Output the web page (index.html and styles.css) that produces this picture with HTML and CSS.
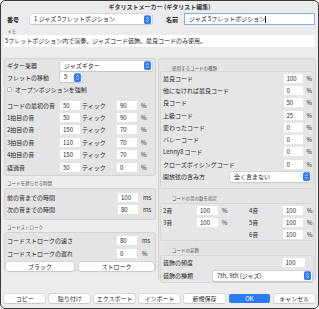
FILE: index.html
```html
<!DOCTYPE html>
<html lang="ja">
<head>
<meta charset="utf-8" />
<title>ギタリストメーカー</title>
<link rel="stylesheet" href="styles.css">
</head>
<body>
<div class="win">
	<div class="title">ギタリストメーカー (ギタリスト編集)</div>

	<div class="head">
		<span class="lbl-num">番号</span>
		<div class="sel sel-num">1 ジャズ 5フレットポジション
			<svg class="step" viewBox="0 0 8 10"><rect width="8" height="10" rx="2" fill="#2f7cf6"/><path d="M2.6 4.1 L4 2.6 L5.4 4.1 M2.6 5.9 L4 7.4 L5.4 5.9" stroke="#fff" stroke-width="0.9" fill="none"/></svg>
		</div>
		<span class="lbl-name">名前</span>
		<div class="inp name-inp">ジャズ 5フレットポジション<span class="caret"></span></div>
	</div>

	<div class="cap memo-cap">メモ</div>
	<div class="inp memo">5フレットポジション内で演奏。ジャズコード装飾。最良コードのみ使用。</div>

	<div class="main">
		<div class="col-l">
			<div class="box box-a">
				<div class="row r-sel">
					<span>ギター楽器</span>
					<div class="sel sel-gtr">ジャズギター
						<svg class="step" viewBox="0 0 8 10"><rect width="8" height="10" rx="2" fill="#2f7cf6"/><path d="M2.6 4.1 L4 2.6 L5.4 4.1 M2.6 5.9 L4 7.4 L5.4 5.9" stroke="#fff" stroke-width="0.9" fill="none"/></svg>
					</div>
				</div>
				<div class="row r-sel">
					<span>フレットの移動</span>
					<div class="sel sel-fret">5
						<svg class="step" viewBox="0 0 8 10"><rect width="8" height="10" rx="2" fill="#2f7cf6"/><path d="M2.6 4.1 L4 2.6 L5.4 4.1 M2.6 5.9 L4 7.4 L5.4 5.9" stroke="#fff" stroke-width="0.9" fill="none"/></svg>
					</div>
				</div>
				<div class="row r-chk">
					<span class="chk"></span>
					<span>オープンポジションを強制</span>
				</div>
				<div class="ticks">
					<div class="trow"><span>コードの最初の音</span><span class="num">50</span><span class="unit">ティック</span><span class="num">90</span><span class="pct">%</span></div>
					<div class="trow"><span>1拍目の音</span><span class="num">50</span><span class="unit">ティック</span><span class="num">90</span><span class="pct">%</span></div>
					<div class="trow"><span>2拍目の音</span><span class="num">150</span><span class="unit">ティック</span><span class="num">70</span><span class="pct">%</span></div>
					<div class="trow"><span>3拍目の音</span><span class="num">110</span><span class="unit">ティック</span><span class="num">70</span><span class="pct">%</span></div>
					<div class="trow"><span>4拍目の音</span><span class="num">150</span><span class="unit">ティック</span><span class="num">70</span><span class="pct">%</span></div>
					<div class="trow"><span>経過音</span><span class="num">50</span><span class="unit">ティック</span><span class="num">0</span><span class="pct">%</span></div>
				</div>
			</div>

			<div class="cap sec-cap">コードを遅らせる時間</div>
			<div class="box box-b">
				<div class="mrow"><span>前の音までの時間</span><span class="num">100</span><span class="unit">ms</span></div>
				<div class="mrow"><span>次の音までの時間</span><span class="num">80</span><span class="unit">ms</span></div>
			</div>

			<div class="cap sec-cap">コードストローク</div>
			<div class="box box-c">
				<div class="mrow"><span>コードストロークの速さ</span><span class="num">80</span><span class="unit">ms</span></div>
				<div class="mrow"><span>コードストロークの遅れ</span><span class="num">0</span><span class="unit">%</span></div>
				<div class="pair">
					<span class="btn">ブラック</span>
					<span class="btn">ストローク</span>
				</div>
			</div>
		</div>

		<div class="box col-r">
			<div class="cap rcap1">使用するコードの種類</div>
			<div class="sub sub-1">
				<div class="crow"><span>最良コード</span><span class="num">100</span><span class="pct">%</span></div>
				<div class="crow"><span>他になければ最良コード</span><span class="num">0</span><span class="pct">%</span></div>
				<div class="crow"><span>良コード</span><span class="num">50</span><span class="pct">%</span></div>
				<div class="crow"><span>上級コード</span><span class="num">25</span><span class="pct">%</span></div>
				<div class="crow"><span>変わったコード</span><span class="num">0</span><span class="pct">%</span></div>
				<div class="crow"><span>バレーコード</span><span class="num">0</span><span class="pct">%</span></div>
				<div class="crow"><span>Lenny8 コード</span><span class="num">0</span><span class="pct">%</span></div>
				<div class="crow"><span>クローズボイシングコード</span><span class="num">0</span><span class="pct">%</span></div>
				<div class="crow c-sel">
					<span>開放弦の含み方</span>
					<div class="sel sel-open">全く含まない
						<svg class="step" viewBox="0 0 8 10"><rect width="8" height="10" rx="2" fill="#2f7cf6"/><path d="M2.6 4.1 L4 2.6 L5.4 4.1 M2.6 5.9 L4 7.4 L5.4 5.9" stroke="#fff" stroke-width="0.9" fill="none"/></svg>
					</div>
				</div>
			</div>

			<div class="cap rcap">コードの音の数を指定</div>
			<div class="sub sub-2">
				<span>2音</span><span class="num">100</span><span class="pct">%</span>
				<span>4音</span><span class="num">100</span><span class="pct">%</span>
				<span>3音</span><span class="num">100</span><span class="pct">%</span>
				<span>5音</span><span class="num">100</span><span class="pct">%</span>
				<span></span><span></span><span></span>
				<span>6音</span><span class="num">100</span><span class="pct">%</span>
			</div>

			<div class="cap rcap">コードの装飾</div>
			<div class="sub sub-3">
				<div class="drow"><span>装飾の頻度</span><span class="num dnum">100</span></div>
				<div class="drow">
					<span>装飾の種類</span>
					<div class="sel sel-orn">7th, 9th (ジャズ)
						<svg class="step" viewBox="0 0 8 10"><rect width="8" height="10" rx="2" fill="#2f7cf6"/><path d="M2.6 4.1 L4 2.6 L5.4 4.1 M2.6 5.9 L4 7.4 L5.4 5.9" stroke="#fff" stroke-width="0.9" fill="none"/></svg>
					</div>
				</div>
			</div>
		</div>
	</div>

	<div class="btns">
		<span class="btn">コピー</span>
		<span class="btn">貼り付け</span>
		<span class="btn">エクスポート</span>
		<span class="btn">インポート</span>
		<span class="btn">新規保存</span>
		<span class="btn ok">OK</span>
		<span class="btn">キャンセル</span>
	</div>
</div>
</body>
</html>
```

FILE: styles.css
```css
*{box-sizing:border-box;}
body{margin:0; font-family:"Noto Sans CJK JP", "Noto Sans", sans-serif; font-size:6px; color:#262626;}

.win{width:319px; height:309px; background:#ececec; border:1px solid #3c3c3c; border-radius:5px; overflow:hidden; padding:0 3px;}
.title{height:11px; line-height:11px; text-align:center; font-weight:bold; color:#3a3a3a;}

/* shared controls */
.sel{position:relative; height:10px; line-height:10px; background:#fff; border-radius:2px; box-shadow:0 0 0 0.5px #c4c4c4, 0 0.5px 1px rgba(0,0,0,0.12); padding-left:4px; white-space:nowrap;}
.sel .step{position:absolute; right:1px; top:0.5px; width:7px; height:9px;}
.inp{background:#fff; white-space:nowrap; overflow:hidden;}
.num{display:block; height:9px; line-height:9px; background:#fff; padding-left:3px;}
.btn{display:block; height:9px; line-height:9px; text-align:center; background:#fff; border-radius:2px; box-shadow:0 0 0 0.5px #c8c8c8, 0 0.5px 1px rgba(0,0,0,0.15);}
.cap{font-size:4.5px; color:#555;}
.box{background:#e4e4e4; border:1px solid #d3d3d3; border-radius:3px;}

/* header */
.head{display:flex; align-items:center; height:12px; margin-top:1px;}
.lbl-num{width:26px; padding-left:3px; font-weight:bold;}
.sel-num{width:122px;}
.lbl-name{width:18px; margin-left:14px; font-weight:bold;}
.name-inp{flex:1; height:12px; line-height:9px; border:1.5px solid #85aee6; padding-left:4px;}
.caret{display:inline-block; width:0.6px; height:7px; background:#222; vertical-align:middle;}
.memo-cap{height:10px; line-height:12px; padding-left:3px;}
.memo{height:12px; line-height:12px; padding-left:1px;}

/* main */
.main{display:flex; gap:2px; height:222px; margin-top:11px;}
.col-l{width:153px;}
.col-r{flex:1; padding:0 1px;}

.box-a{height:118px; padding:1px 2px;}
.row{display:flex; align-items:center; height:12px;}
.row > span:first-child{width:53px;}
.r-sel:first-child{height:11px;}
.sel-gtr{width:92px;}
.sel-fret{width:22px;}
.r-chk{height:13px;}
.r-chk > span.chk{width:5px; height:5px; background:#fff; border:0.5px solid #b5b5b5; border-radius:1px; margin-right:3px;}
.ticks{margin-top:3px;}
.trow{display:grid; grid-template-columns:53px 20px 37px 20px auto; align-items:center; height:12.4px;}
.trow .unit{padding-left:2px;}
.trow .pct{padding-left:4px;}

.sec-cap{height:12px; padding:4px 0 0 3px;}
.box-b{height:32px; padding:2px 2px 0;}
.mrow{display:grid; grid-template-columns:111px 20px auto; align-items:center; height:12px;}
.mrow .unit{padding-left:5px;}
.box-c{height:39px; padding:1px 1px 0;}
.box-c .mrow{padding-left:1px; grid-template-columns:110px 20px auto; height:13px;}
.pair{display:grid; grid-template-columns:68px 75px; gap:5px; margin-top:2px;}

/* right column */
.rcap1{height:12px; padding:6px 0 0 12px;}
.rcap{height:14px; padding:6px 0 0 12px;}
.sub{border:1px solid #d7d7d7; border-radius:3px; background:#e6e6e6;}
.sub-1{height:118px; padding-top:0;}
.crow{display:grid; grid-template-columns:1fr 19px 10px; align-items:center; height:12.3px; padding-left:2px;}
.crow .pct{padding-left:4px;}
.c-sel{grid-template-columns:67px 82px;}
.sel-open{margin-right:1px;}
.sub-2{display:grid; grid-template-columns:34px 21px 31px 34px 20px auto; grid-auto-rows:12px; align-items:center; height:38px; padding:0 0 0 2px;}
.sub-2 .pct{padding-left:4px;}
.sub-3{height:28px; padding-left:2px;}
.drow{display:grid; grid-template-columns:50px 1fr; align-items:center; height:13px;}
.dnum{width:22px; justify-self:end; margin-right:8px;}
.sel-orn{margin-right:1px;}

/* bottom buttons */
.btns{display:flex; gap:3.5px; margin-top:14px;}
.btns .btn{flex:1;}
.btns .ok{background:#2d7bf4; color:#fff; box-shadow:none;}
```
